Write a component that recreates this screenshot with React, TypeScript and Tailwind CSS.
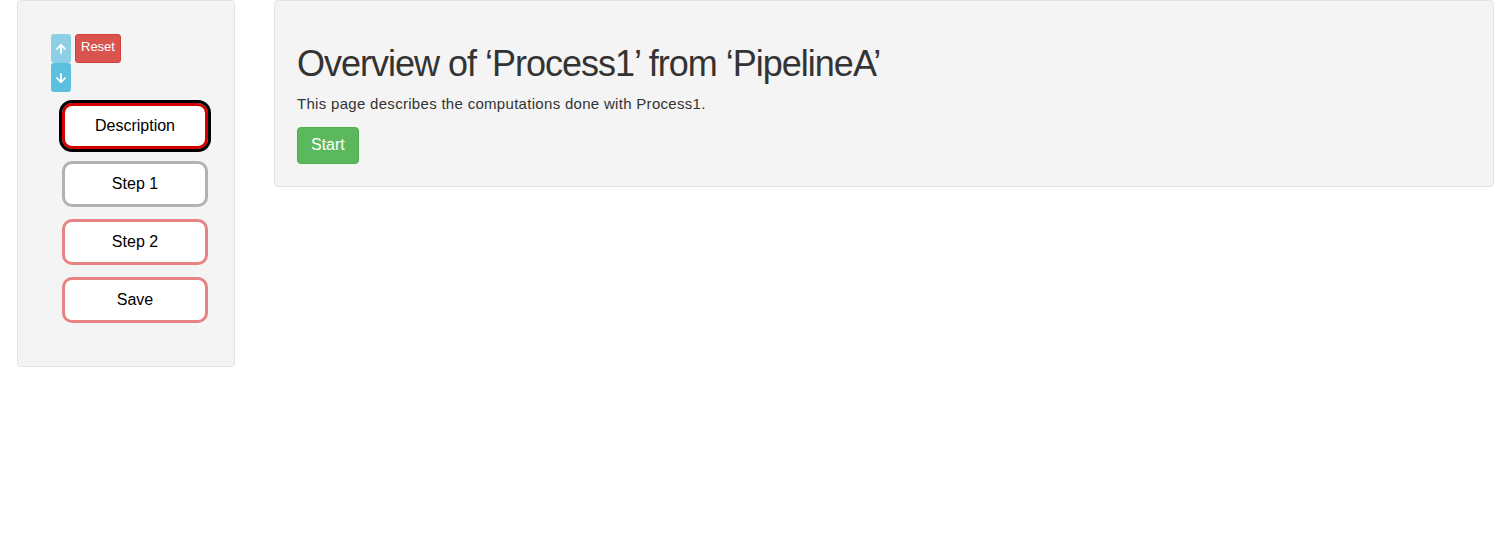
import { ArrowUp, ArrowDown } from "lucide-react";

const steps = [
  { label: "Description", ring: "border-[#d40000] outline-[3px] outline-black outline-solid" },
  { label: "Step 1", ring: "border-[#b4b1ae]" },
  { label: "Step 2", ring: "border-[#e88383]" },
  { label: "Save", ring: "border-[#e88383]" },
];

export default function App() {
  return (
    <div className="flex items-start bg-white min-h-[555px] font-['Liberation_Sans',Arial,sans-serif] text-[#333]">
      {/* Sidebar */}
      <div className="ml-[17px] w-[218px] h-[367px] bg-[#f4f4f4] border border-[#e3e3e3] rounded-[4px] pt-[33px]">
        <div className="flex items-start ml-[33px] gap-[4px]">
          <div className="flex flex-col">
            <button className="w-[20px] h-[29px] bg-[#8dd0e6] rounded-[3px] flex items-center justify-center text-white">
              <ArrowUp size={14} strokeWidth={3} />
            </button>
            <button className="w-[20px] h-[29px] bg-[#5bc0de] rounded-[3px] flex items-center justify-center text-white">
              <ArrowDown size={14} strokeWidth={3} />
            </button>
          </div>
          <button className="h-[29px] px-[5px] pb-[4px] bg-[#d9534f] border border-[#d43f3a] rounded-[3px] text-white text-[13px]">
            Reset
          </button>
        </div>
        <div className="flex flex-col gap-[12px] ml-[44px] mt-[11px]">
          {steps.map((s) => (
            <button
              key={s.label}
              className={`w-[146px] h-[46px] bg-white border-[3px] rounded-[10px] text-[16px] text-black ${s.ring}`}
            >
              {s.label}
            </button>
          ))}
        </div>
      </div>

      {/* Main panel */}
      <div className="ml-[39px] w-[1220px] h-[187px] bg-[#f4f4f4] border border-[#e3e3e3] rounded-[4px] pl-[22px] pt-[43px]">
        <h1 className="text-[36px] leading-[1.1] tracking-[-1px] text-[#333]">Overview of ‘Process1’ from ‘PipelineA’</h1>
        <p className="mt-[10px] text-[15px] leading-[20px] tracking-[0.3px] text-[#333]">
          This page describes the computations done with Process1.
        </p>
        <button className="mt-[13px] h-[37px] px-[13px] bg-[#5cb85c] border border-[#4cae4c] rounded-[4px] text-white text-[16px]">
          Start
        </button>
      </div>
    </div>
  );
}
